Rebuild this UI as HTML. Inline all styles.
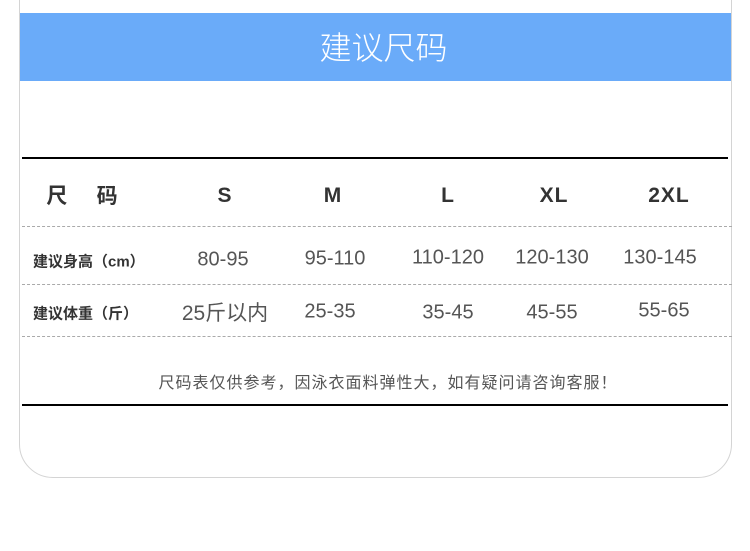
<!DOCTYPE html>
<html><head><meta charset="utf-8"><style>
*{margin:0;padding:0;box-sizing:border-box}
body{width:750px;height:551px;background:#fff;position:relative;overflow:hidden;font-family:"Liberation Sans","Noto Sans CJK SC",sans-serif}
.card{position:absolute;left:19px;top:-40px;width:713px;height:518px;border:1px solid #d4d4d4;border-radius:34px;}
.band{position:absolute;left:20px;top:13px;width:711px;height:68px;background:#6aabf9;color:#fff;font-size:32px;text-align:center;line-height:70px;font-weight:300;letter-spacing:0;padding-left:16px}
.bl{position:absolute;left:22px;width:706px;height:2px;background:#000}
.dl{position:absolute;left:22px;width:710px;border-top:1px dashed #aaa}
.t{position:absolute;transform:translate(-50%,-50%);white-space:nowrap;color:#444}
.h{font-weight:bold;font-size:21px;color:#333;letter-spacing:1px}
.d{font-size:20px;color:#555}
.lab{position:absolute;left:33px;transform:translateY(-50%);font-weight:bold;font-size:15px;color:#333;white-space:nowrap}
</style></head><body>
<div class="card"></div>
<div class="band">建议尺码</div>
<div class="bl" style="top:157px"></div>
<div class="t h" style="left:82px;top:195px;font-size:21px;letter-spacing:0">尺&nbsp;&nbsp;&nbsp;&nbsp;&nbsp;码</div>
<div class="t h" style="left:225px;top:196px">S</div>
<div class="t h" style="left:333px;top:196px">M</div>
<div class="t h" style="left:448px;top:196px">L</div>
<div class="t h" style="left:554px;top:196px">XL</div>
<div class="t h" style="left:669px;top:196px">2XL</div>
<div class="dl" style="top:226px"></div>
<div class="lab" style="top:261px">建议身高（cm）</div>
<div class="t d" style="left:223px;top:260px">80-95</div>
<div class="t d" style="left:335px;top:259px">95-110</div>
<div class="t d" style="left:448px;top:258px">110-120</div>
<div class="t d" style="left:552px;top:258px">120-130</div>
<div class="t d" style="left:660px;top:258px">130-145</div>
<div class="dl" style="top:284px"></div>
<div class="lab" style="top:313px">建议体重（斤）</div>
<div class="t d" style="left:225px;top:312px;font-size:21px">25斤以内</div>
<div class="t d" style="left:330px;top:312px">25-35</div>
<div class="t d" style="left:448px;top:313px">35-45</div>
<div class="t d" style="left:552px;top:313px">45-55</div>
<div class="t d" style="left:664px;top:311px">55-65</div>
<div class="dl" style="top:336px"></div>
<div class="t" style="left:388px;top:381px;font-size:16px;letter-spacing:1px;color:#555">尺码表仅供参考，因泳衣面料弹性大，如有疑问请咨询客服！</div>
<div class="bl" style="top:404px"></div>
</body></html>
